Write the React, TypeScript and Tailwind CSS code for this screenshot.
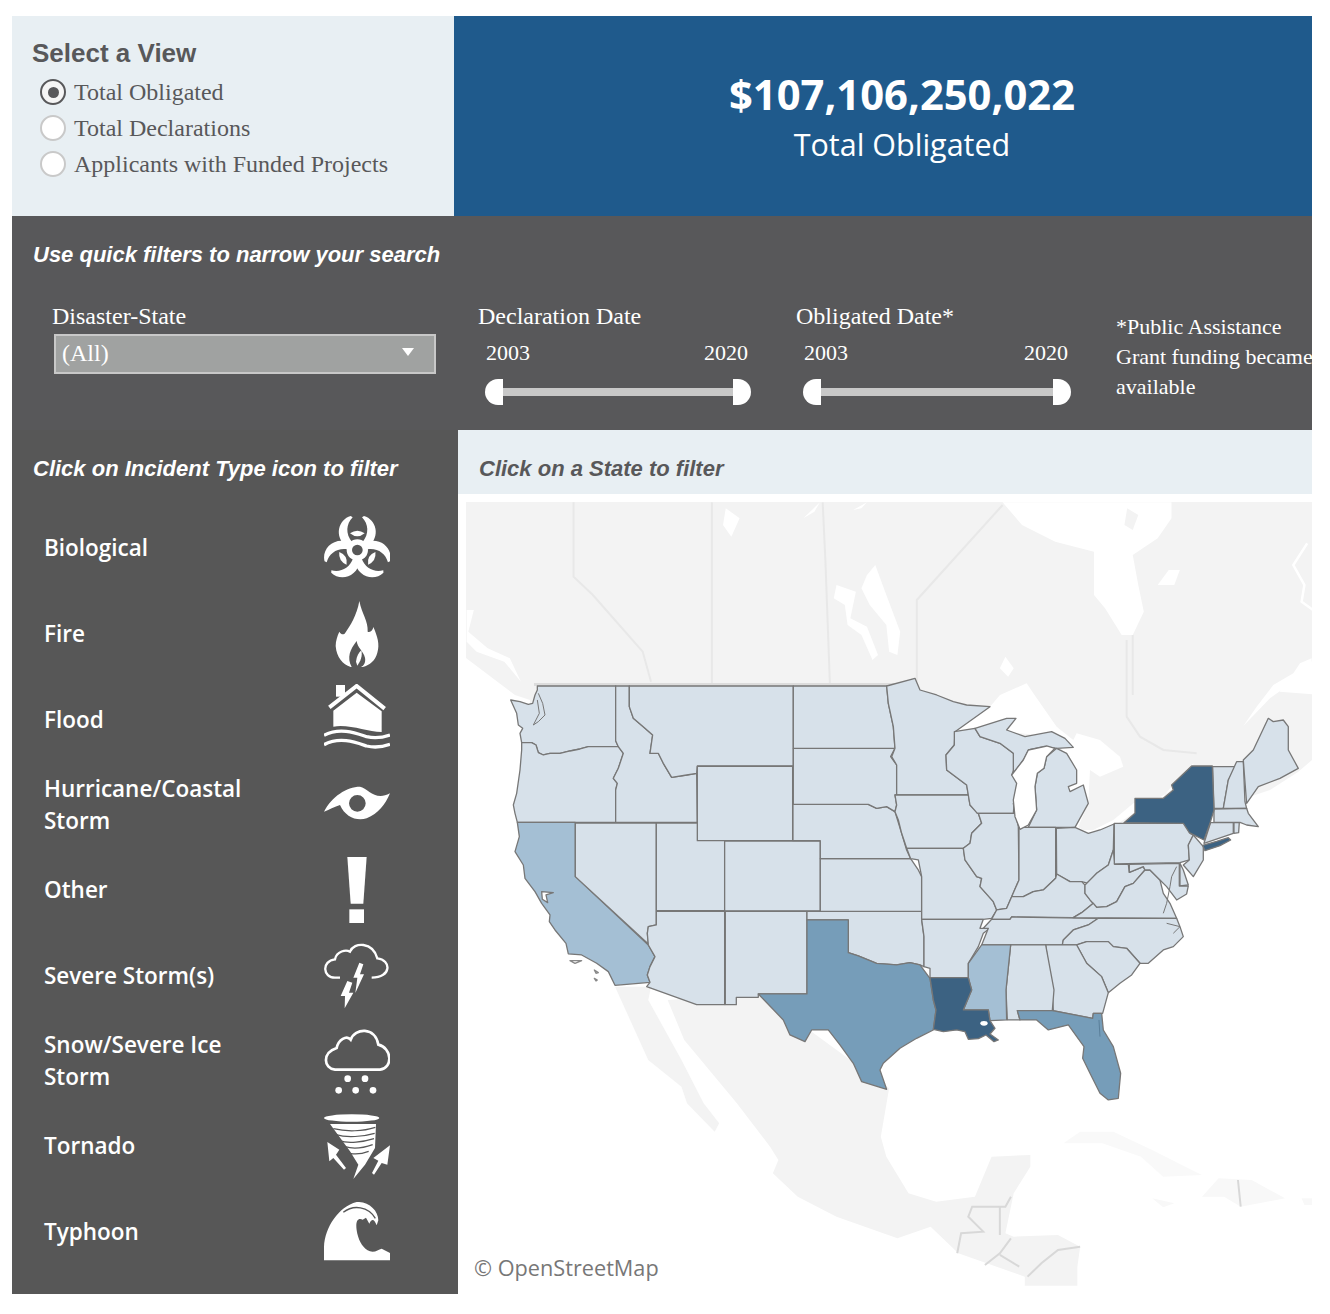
import React from "react";

const LIGHT = "#d7e1ea", MIDL = "#a4bfd4", MID = "#769db9", DARK = "#3c6282";
const vb = "non-scaling-stroke" as const;

const west: [string, string][] = [
  [LIGHT, "112,48 347,48 347,212 355,230 265,230 240,237 210,243 180,250 150,250 130,255 115,248 108,225 95,218 65,218 60,190 68,175 55,165 50,130 32,90 60,95 85,103 98,100 105,75 112,60"],
  [LIGHT, "65,218 95,218 108,225 115,248 130,255 150,250 180,250 210,243 240,237 265,230 355,230 370,250 355,295 340,325 352,340 347,360 347,457 52,457 45,430 40,405 50,370 60,300 65,240"],
  [MIDL, "52,457 226,457 226,620 445,825 465,860 450,890 442,915 450,937 345,946 325,905 290,880 245,855 205,852 198,820 165,780 148,755 150,735 125,700 105,665 75,625 70,585 45,545 58,500"],
  [LIGHT, "226,459 469,459 469,765 445,770 442,790 445,822 226,620"],
  [LIGHT, "347,48 388,48 388,110 400,145 435,175 458,195 450,250 475,250 490,280 515,322 560,315 590,310 592,457 347,457 347,360 352,340 340,325 355,295 370,250 355,230 347,212"],
  [LIGHT, "388,48 880,48 880,288 592,288 590,310 560,315 515,322 490,280 475,250 450,250 458,195 435,175 400,145 388,110"],
  [LIGHT, "592,289 878,289 878,512 592,512"],
  [LIGHT, "469,459 592,459 592,512 674,512 674,722 469,722"],
  [LIGHT, "674,513 961,513 961,723 674,723"],
  [LIGHT, "469,724 674,724 674,1004 590,1004 440,950 450,937 442,915 450,890 465,860 445,825 442,790 445,770 469,765"],
  [LIGHT, "676,724 921,724 921,972 775,972 775,982 709,982 709,1004 676,1004"],
  [LIGHT, "921,724 1265,724 1265,748 1272,800 1272,890 1260,885 1230,878 1190,885 1130,880 1075,858 1045,848 1045,750 921,750"],
  [MID, "921,750 1045,750 1045,848 1075,858 1130,880 1190,885 1230,878 1260,885 1290,925 1300,990 1308,1020 1300,1080 1250,1105 1200,1135 1150,1180 1140,1200 1160,1258 1085,1235 1060,1180 1020,1125 985,1080 935,1080 915,1115 870,1095 850,1050 775,972 921,972"],
  [LIGHT, "961,566 1232,566 1255,600 1265,620 1265,724 961,724"],
  [LIGHT, "879,403 1105,403 1130,415 1160,410 1185,425 1205,490 1220,540 1232,566 961,566 961,512 879,512"],
  [LIGHT, "880,235 1185,235 1172,260 1190,285 1190,375 1185,375 1190,405 1185,425 1160,410 1130,415 1105,403 880,403"],
  [LIGHT, "880,48 1160,48 1165,100 1180,170 1185,235 880,235"],
];

const east: [string, string][] = [
  [LIGHT, "-40,48 45,25 60,60 110,75 160,95 200,105 270,110 165,185 163,225 138,255 140,300 200,345 205,375 -10,375 -10,285 -25,260 -15,235 -20,170 -35,100"],
  [LIGHT, "-15,375 205,375 210,405 235,430 245,460 215,490 210,520 190,535 20,535 5,490 -5,450 -15,425 -10,405"],
  [LIGHT, "20,535 190,535 195,570 230,620 245,625 240,650 280,695 290,720 275,745 250,748 65,748 65,620 55,570 32,566"],
  [LIGHT, "65,748 250,748 240,775 270,775 250,790 235,830 205,880 205,923 90,923 90,895 72,890 72,800"],
  [LIGHT, "163,185 225,175 240,200 300,220 340,250 350,280 335,315 360,300 345,375 340,430 232,430 210,405 205,375 200,345 140,300 138,255 163,225"],
  [LIGHT, "232,430 345,430 340,400 355,470 357,630 335,680 320,715 290,720 280,695 240,650 245,625 230,620 195,570 190,535 210,520 215,490 245,460 235,430"],
  [LIGHT, "225,175 320,145 348,145 320,180 375,200 455,185 495,205 520,232 470,235 435,230 385,240 370,270 340,310 340,250 300,220 240,200"],
  [LIGHT, "470,235 500,250 530,300 530,340 505,350 510,365 550,345 565,400 525,472 385,472 410,420 405,350 412,310 432,295 440,260"],
  [LIGHT, "357,472 467,472 467,625 430,660 400,665 370,680 335,680 357,630"],
  [LIGHT, "469,475 525,472 565,490 600,480 642,462 640,540 625,585 590,610 565,640 545,635 510,635 470,612"],
  [LIGHT, "335,680 370,680 400,665 430,660 467,625 470,612 510,635 545,635 555,645 555,670 580,700 545,728 520,743 335,741 330,748 275,748 290,720 320,715"],
  [LIGHT, "275,748 330,748 335,741 595,745 565,765 520,780 490,810 487,825 245,825 265,775 250,775"],
  [LIGHT, "555,645 590,610 625,585 640,540 645,583 685,583 688,607 730,590 735,600 700,640 675,650 650,695 620,710 590,712 570,690 555,670"],
  [LIGHT, "520,743 545,728 580,700 590,712 620,710 650,695 675,650 700,640 735,600 750,600 780,630 790,670 810,700 830,745"],
  [LIGHT, "595,745 830,745 840,770 850,800 820,830 790,840 745,880 720,880 680,835 640,830 625,815 560,815 530,825 487,825 490,810 520,780 565,765"],
  [LIGHT, "530,825 560,815 625,815 640,830 680,835 720,880 695,915 660,940 625,968 605,920 560,880"],
  [LIGHT, "437,825 530,825 560,880 605,920 625,968 608,1030 580,1030 578,1045 460,1022 457,970"],
  [LIGHT, "332,825 437,825 462,960 457,1022 352,1022 360,1050 335,1050 322,1050 318,960"],
  [MIDL, "245,825 332,825 318,960 320,1050 270,1052 265,1020 190,1020 215,960 205,923 205,880"],
  [DARK, "90,923 205,923 215,960 190,1020 265,1020 270,1052 285,1075 270,1092 295,1110 282,1115 258,1095 235,1106 205,1108 195,1085 170,1080 130,1085 100,1078 108,1020 100,990"],
  [MID, "352,1022 457,1022 578,1045 580,1030 605,1030 610,1080 640,1130 662,1210 655,1285 625,1290 600,1270 570,1210 548,1165 552,1130 505,1065 445,1080 410,1050 360,1050"],
  [LIGHT, "643,460 855,460 870,490 880,495 865,525 868,570 840,578 643,582"],
  [LIGHT, "938,290 1010,290 985,330 970,415 942,415"],
  [LIGHT, "1010,275 1030,275 1035,395 1040,415 970,415 985,330"],
  [LIGHT, "1030,270 1060,240 1105,145 1120,155 1150,150 1165,170 1165,240 1195,295 1140,325 1075,350 1040,400 1033,310"],
  [LIGHT, "942,417 1040,415 1045,430 1075,470 1040,465 1020,457 942,457"],
  [LIGHT, "932,458 1000,458 1000,490 912,520"],
  [LIGHT, "1002,458 1018,458 1016,488 1002,490"],
  [LIGHT, "880,495 910,530 910,570 880,620 850,585 868,570 865,525"],
  [LIGHT, "840,580 850,600 865,645 840,648"],
  [LIGHT, "688,583 838,580 838,648 865,648 860,672 830,690 800,650 780,630 750,600 735,600 730,590 688,607"],
  [DARK, "672,458 705,430 705,385 790,385 820,360 815,345 875,288 937,288 942,420 930,460 912,510 868,488 850,460"],
  [DARK, "908,526 950,514 985,503 992,510 960,527 915,542"],
];

function USMap() {
  return (
    <svg viewBox="466 502 846 784" className="block w-full h-full">
      <polygon fill="#f3f3f3" points="466,502 1312,502 1312,760 1298,772 1270,790 1240,800 1200,800 1130,820 1100,830 530,830 530,700 515,695 466,658" />
      <g transform="translate(460,495) scale(0.5537,0.3333)">
        <polyline fill="none" stroke="#e8e8e8" strokeWidth="2" vectorEffect={vb} points="205,22 205,245 240,300 330,470 345,560" />
        <polyline fill="none" stroke="#e8e8e8" strokeWidth="2" vectorEffect={vb} points="455,22 455,565" />
        <polyline fill="none" stroke="#e8e8e8" strokeWidth="2" vectorEffect={vb} points="655,22 660,200 668,565" />
        <polyline fill="none" stroke="#e8e8e8" strokeWidth="2" vectorEffect={vb} points="980,30 825,315 825,560" />
        <polyline fill="none" stroke="#e8e8e8" strokeWidth="2" vectorEffect={vb} points="1215,420 1215,600" />
        <polygon fill="#fff" points="750,210 770,300 795,410 790,480 775,470 770,390 740,330 725,280 735,240" />
        <polygon fill="#fff" points="680,270 715,290 705,370 735,395 755,480 745,495 725,420 700,390 695,330 675,310" />
        <polygon fill="#fff" points="980,22 1285,22 1285,70 1260,130 1215,180 1225,270 1235,350 1215,420 1195,420 1165,340 1145,300 1145,170 1075,140 1015,90" />
        <polygon fill="#f3f3f3" points="1205,40 1225,60 1215,105 1200,90" />
        <polygon fill="#fff" points="985,485 1000,520 990,545 975,520" />
        <polygon fill="#fff" points="1280,225 1300,225 1290,270 1260,270" />
        <polyline fill="none" stroke="#fff" strokeWidth="2.5" vectorEffect={vb} points="1530,145 1505,210 1525,270 1520,320 1553,360" />
        <polygon fill="#fff" points="620,70 650,22 640,50" />
        <polygon fill="#fff" points="480,40 505,70 490,125 475,90" />
        <polygon fill="#fff" points="710,45 735,22 725,40" />
        <polygon fill="#fff" points="12,345 25,345 15,410 50,460 90,490 110,560 80,500 30,470 12,440" />
        <polygon fill="#fff" points="1553,490 1520,510 1480,590 1553,600" />
      </g>
      <g transform="translate(1100,640) scale(0.3333)">
        <polyline fill="none" stroke="#e8e8e8" strokeWidth="2" vectorEffect={vb} points="80,0 80,230 120,290 190,330 290,340" />
        <polygon fill="#fff" points="430,258 510,175 600,110 635,100 635,55 600,70 580,100 520,135 470,200" />
      </g>
      <g transform="translate(900,670) scale(0.3333)" fill="#fff">
        <polygon points="165,185 270,110 300,75 380,40 400,70 470,170 500,205 225,175" />
        <polygon points="470,170 520,210 530,190 600,210 660,260 670,290 600,320 570,300 565,400 535,470 560,490 640,450 700,400 790,380 830,330 880,280 880,310 800,370 700,430 640,470 525,490 500,300" />
      </g>
      <g transform="translate(460,980) scale(0.5537,0.3333)">
        <polygon fill="#f3f3f3" points="375,60 540,40 775,325 760,470 770,530 810,640 860,665 930,650 960,530 1030,525 1030,560 1000,640 985,760 1000,770 1080,765 1120,800 1115,860 1115,917 1020,917 1020,890 900,820 850,740 790,775 680,710 610,650 565,580 575,540 560,500 500,370 470,310 405,180" />
        <polygon fill="#f3f3f3" points="280,20 345,20 340,60 400,240 440,370 468,430 460,455 410,370 400,320 340,240" />
        <polygon fill="#f9f9f9" points="1090,490 1120,455 1180,455 1250,510 1310,560 1340,585 1270,590 1230,530 1160,490 1110,490" />
        <polygon fill="#f8f8f8" points="1340,650 1370,595 1430,600 1490,655 1410,680 1380,650" />
        <polygon fill="#f8f8f8" points="1250,655 1290,670 1270,682" />
        <polygon fill="#f8f8f8" points="1520,655 1553,655 1553,675 1525,675" />
        <polyline fill="none" stroke="#d8d8d8" strokeWidth="2" vectorEffect={vb} points="1405,600 1410,680" />
        <g fill="none" stroke="#d8d8d8" strokeWidth="2">
          <polyline vectorEffect={vb} points="995,650 985,680 925,680 918,710 945,755 905,760 898,820" />
          <polyline vectorEffect={vb} points="975,680 975,765" />
          <polyline vectorEffect={vb} points="995,775 975,820 948,855" />
          <polyline vectorEffect={vb} points="975,825 1010,860" />
          <polyline vectorEffect={vb} points="1120,800 1080,810 1050,850 1025,890" />
        </g>
      </g>
      <line x1="534" y1="684.5" x2="915" y2="684.5" stroke="#dcdcdc" strokeWidth="3" />
      <g transform="translate(500,670) scale(0.3333)" stroke="#777" strokeWidth="1.3" strokeLinejoin="round">
        {west.map(([f, p], i) => (
          <polygon key={i} fill={f} points={p} vectorEffect={vb} />
        ))}
        <polyline fill="none" stroke="#777" strokeWidth="1" points="115,70 128,100 135,135 115,155 100,165 118,130 112,90" vectorEffect={vb} />
        <polygon fill="#fff" points="125,665 160,668 138,675 143,698 127,688" vectorEffect={vb} />
        <polygon fill="#fff" stroke="#888" points="210,872 245,872 225,880" vectorEffect={vb} />
        <polygon fill="#fff" stroke="#888" points="283,900 295,908 288,910" vectorEffect={vb} />
        <polygon fill="#fff" stroke="#888" points="283,925 292,930 288,933" vectorEffect={vb} />
      </g>
      <g transform="translate(900,670) scale(0.3333)" stroke="#777" strokeWidth="1.3" strokeLinejoin="round">
        {east.map(([f, p], i) => (
          <polygon key={i} fill={f} points={p} vectorEffect={vb} />
        ))}
        <polygon fill="#fff" stroke="#777" points="335,315 370,270 385,240 440,228 465,235 440,260 432,295 412,310 405,350 410,420 385,465 360,478 345,440 340,390 350,340" vectorEffect={vb} />
        <polyline fill="none" stroke="#777" strokeWidth="1" points="830,590 815,620 810,650 800,700 790,730" vectorEffect={vb} />
        <polyline fill="none" stroke="#777" strokeWidth="1" points="800,760 840,770 820,790" vectorEffect={vb} />
        <polyline fill="none" stroke="#5a7f9a" strokeWidth="1" points="597,1050 600,1100" vectorEffect={vb} />
        <ellipse cx="252" cy="1060" rx="11" ry="7" fill="#fff" stroke="none" />
      </g>
    </svg>
  );
}

function Icon({ box, className, children }: { box: string; className?: string; children: React.ReactNode }) {
  return (
    <svg viewBox={box} className={"w-[66px] h-[66px] shrink-0 " + (className ?? "")}>
      {children}
    </svg>
  );
}

const W = "#ffffff", BG = "#575757";

function Bio() {
  const arm = (
    <g>
      <path fill={W} d="M152,48 C116,58 100,108 140,142 L156,126 C136,102 138,72 158,52 Z" />
      <path fill={W} d="M192,48 C228,58 244,108 204,142 L188,126 C208,102 206,72 186,52 Z" />
      <path fill={W} d="M150,100 Q172,84 194,100 Q172,118 150,100 Z" />
    </g>
  );
  return (
    <Icon box="72 42 198 198">
      {arm}
      <g transform="rotate(120 172 150)">{arm}</g>
      <g transform="rotate(240 172 150)">{arm}</g>
      <circle cx="172" cy="150" r="32" fill={W} />
      <circle cx="172" cy="150" r="16" fill={BG} />
    </Icon>
  );
}

function Fire() {
  return (
    <Icon box="72 300 198 198">
      <path fill={W} d="M178,300 C186,340 205,360 203,392 C212,395 218,388 220,378 C232,405 240,430 232,455 C226,478 210,492 188,498 L152,498 C128,490 110,470 107,435 C107,420 112,405 118,392 C124,402 132,402 136,395 C150,375 170,345 178,300 Z" />
      <path fill={BG} d="M155,498 C140,470 150,445 170,420 C172,440 190,450 195,470 C198,485 190,495 183,498 Z" />
      <path fill={W} d="M168,482 C170,465 176,455 184,448 C188,465 182,480 172,494 Z" />
    </Icon>
  );
}

function House() {
  return (
    <Icon box="72 552 198 198">
      <path fill={W} d="M108,555 H135 V590 H108 Z" />
      <path fill="none" stroke={W} strokeWidth="12" d="M88,622 L170,558 L254,626" />
      <path fill={W} d="M100,632 L170,578 L245,634 V696 C200,696 150,672 100,680 Z" />
      <path fill="none" stroke={W} strokeWidth="10" d="M72,706 C120,680 170,700 200,710 C225,716 250,712 270,705" />
      <path fill="none" stroke={W} strokeWidth="10" d="M72,734 C120,708 170,728 200,738 C225,744 250,740 270,733" />
    </Icon>
  );
}

function Eye() {
  return (
    <Icon box="72 30 198 198">
      <path fill={W} fillRule="evenodd" d="M72,155 C95,110 140,80 180,80 C205,85 225,125 270,100 C255,135 235,160 200,175 C170,185 135,170 120,135 C105,140 85,150 72,155 Z M172,105 A25,25 0 1 0 172.1,155 A25,25 0 1 0 172,105 Z" />
    </Icon>
  );
}

function Excl() {
  return (
    <Icon box="72 288 198 198">
      <path fill={W} d="M142,288 H200 L190,428 H152 Z" />
      <path fill={W} d="M148,445 H192 V486 H148 Z" />
    </Icon>
  );
}

function Storm() {
  return (
    <Icon box="72 546 198 198">
      <path fill="none" stroke={W} strokeWidth="7" d="M120,650 H105 C68,650 64,600 105,595 C110,570 138,565 150,572 C162,542 218,542 232,592 C274,596 276,650 215,650" />
      <path fill={W} d="M178,605 L160,650 L172,650 L166,696 L192,640 L180,640 L190,610 Z" />
      <path fill={W} d="M142,660 L122,705 L135,705 L134,742 L160,695 L147,695 L157,665 Z" />
    </Icon>
  );
}

function Snow() {
  return (
    <Icon box="72 25 198 198">
      <path fill="none" stroke={W} strokeWidth="8" d="M105,150 C70,145 66,100 110,85 C115,60 140,45 152,60 C165,25 225,20 235,75 C276,85 280,145 240,150 Z" />
      <g fill={W}>
        <circle cx="143" cy="177" r="10" />
        <circle cx="195" cy="177" r="10" />
        <circle cx="116" cy="212" r="10" />
        <circle cx="167" cy="212" r="10" />
        <circle cx="219" cy="212" r="10" />
      </g>
    </Icon>
  );
}

function Tornado() {
  return (
    <Icon box="72 275 198 198">
      <ellipse cx="155" cy="290" rx="83" ry="11" fill={W} />
      <path fill={W} d="M90,308 H228 L225,380 L195,430 L160,473 L175,430 L150,390 Z" />
      <g stroke={BG} strokeWidth="3.5" fill="none">
        <path d="M100,322 C140,332 190,330 226,318" />
        <path d="M108,340 C140,350 190,346 224,336" />
        <path d="M118,358 C145,368 190,362 222,352" />
        <path d="M135,376 C160,384 190,380 218,370" />
        <path d="M150,396 C170,400 190,396 206,390" />
      </g>
      <path fill={W} d="M82,362 L118,385 L108,400 L138,440 L132,445 L100,410 L88,420 Z" />
      <path fill={W} d="M270,372 L262,430 L245,425 L222,460 L216,455 L235,418 L220,410 Z" />
    </Icon>
  );
}

function Wave() {
  return (
    <Icon box="72 545 198 198">
      <path fill={W} d="M72,720 V680 C75,620 115,560 170,545 C205,543 235,570 235,600 L230,615 C222,595 215,595 208,610 L198,592 L188,598 C170,590 165,610 172,640 C178,665 190,685 210,693 C225,697 235,688 245,685 L270,698 V720 Z" />
      <path fill="none" stroke={BG} strokeWidth="4" d="M130,576 C160,552 205,558 226,594" />
    </Icon>
  );
}

const incidents: { label: React.ReactNode; icon: React.ReactNode; row: string; shift: string }[] = [
  { label: "Biological", icon: <Bio />, row: "h-[86px]", shift: "-mt-[2px]" },
  { label: "Fire", icon: <Fire />, row: "h-[86px]", shift: "-mt-[1px]" },
  { label: "Flood", icon: <House />, row: "h-[85px]", shift: "-mt-[5px]" },
  { label: <>Hurricane/Coastal<br />Storm</>, icon: <Eye />, row: "h-[85px]", shift: "-mt-[3px]" },
  { label: "Other", icon: <Excl />, row: "h-[86px]", shift: "-mt-[1px]" },
  { label: "Severe Storm(s)", icon: <Storm />, row: "h-[86px]", shift: "-mt-[1px]" },
  { label: <>Snow/Severe Ice<br />Storm</>, icon: <Snow />, row: "h-[84px]", shift: "-mt-[1px]" },
  { label: "Tornado", icon: <Tornado />, row: "h-[86px]", shift: "-mt-[1px]" },
  { label: "Typhoon", icon: <Wave />, row: "h-[86px]", shift: "mt-[6px]" },
];

function Thumb({ side }: { side: "l" | "r" }) {
  return (
    <div className={"w-[18px] h-[26px] bg-white shrink-0 " + (side === "l" ? "rounded-l-[13px]" : "rounded-r-[13px]")} />
  );
}

function Slider({ from, to, w }: { from: string; to: string; w: string }) {
  return (
    <div className={"mt-[8px] " + w}>
      <div className="flex justify-between pl-[8px] pr-[3px] text-[22px] leading-[26px] text-white">
        <span>{from}</span>
        <span>{to}</span>
      </div>
      <div className="flex items-center mt-[13px] pl-[7px]">
        <Thumb side="l" />
        <div className="flex-1 h-[8px] bg-[#c8c8c8]" />
        <Thumb side="r" />
      </div>
    </div>
  );
}

function Radio({ on, label }: { on?: boolean; label: string }) {
  return (
    <div className="flex items-center h-[36px]">
      <div className={"w-[26px] h-[26px] rounded-full flex items-center justify-center border-[2.5px] " + (on ? "border-[#58585a] bg-[#f5f5f5]" : "border-[#c9c9c9] bg-white")}>
        {on && <div className="w-[11px] h-[11px] rounded-full bg-[#58585a]" />}
      </div>
      <span className="ml-[8px] text-[24px] text-[#58585a]">{label}</span>
    </div>
  );
}

export default function App() {
  return (
    <div className="bg-white w-[1330px] h-[1314px] pt-[16px] pl-[12px] font-['Liberation_Serif',serif]">
      <div className="w-[1300px]">
        <div className="flex h-[200px]">
          <div className="w-[442px] bg-[#e8eff3] pl-[20px] pt-[20px]">
            <div className="font-['Liberation_Sans',sans-serif] font-bold text-[26px] leading-[34px] text-[#58585a]">Select a View</div>
            <div className="pl-[8px] mt-[4px]">
              <Radio on label="Total Obligated" />
              <Radio label="Total Declarations" />
              <Radio label="Applicants with Funded Projects" />
            </div>
          </div>
          <div className="flex-1 bg-[#1f5a8c] text-white flex flex-col items-center pl-[38px] pt-[52px] font-['Open_Sans',sans-serif]">
            <div className="font-bold text-[41.75px] leading-[52px]">$107,106,250,022</div>
            <div className="text-[30.5px] leading-[44px] mt-[2px]">Total Obligated</div>
          </div>
        </div>

        <div className="h-[214px] bg-[#58585a] text-white overflow-hidden pt-[24px]">
          <div className="pl-[21px] font-['Liberation_Sans',sans-serif] font-bold italic text-[22px] leading-[30px]">Use quick filters to narrow your search</div>
          <div className="flex mt-[30px]">
            <div className="w-[424px] pl-[40px] shrink-0">
              <div className="text-[24px] leading-[32px]">Disaster-State</div>
              <div className="ml-[2px] mt-[2px] w-[382px] h-[40px] bg-[#a0a2a1] border-2 border-[#c8c8c8] flex items-center justify-between pl-[6px] pr-[20px]">
                <span className="text-[24px] leading-[32px] -mt-[2px]">(All)</span>
                <span className="w-0 h-0 border-l-[6px] border-r-[6px] border-t-[8px] border-l-transparent border-r-transparent border-t-white -mt-[4px]" />
              </div>
            </div>
            <div className="w-[318px] pl-[42px] shrink-0">
              <div className="text-[24px] leading-[32px]">Declaration Date</div>
              <Slider from="2003" to="2020" w="w-[273px]" />
            </div>
            <div className="w-[320px] shrink-0 pl-[42px]">
              <div className="text-[24px] leading-[32px]">Obligated Date*</div>
              <Slider from="2003" to="2020" w="w-[275px]" />
            </div>
            <div className="flex-1 pt-[12px] pl-[42px] text-[22px] leading-[30px] whitespace-nowrap">
              <div>*Public Assistance</div>
              <div>Grant funding became</div>
              <div>available</div>
            </div>
          </div>
        </div>

        <div className="flex h-[864px]">
          <div className="w-[446px] bg-[#575757] text-white">
            <div className="pl-[21px] pt-[24px] h-[75px] font-['Liberation_Sans',sans-serif] font-bold italic text-[22px] leading-[30px]">Click on Incident Type icon to filter</div>
            <div className="font-['Open_Sans',sans-serif] font-semibold text-[22.5px] leading-[32px]">
              {incidents.map((r, i) => (
                <div key={i} className={"flex items-center justify-between pl-[32px] pr-[68px] " + r.row}>
                  <div>{r.label}</div>
                  <div className={r.shift}>{r.icon}</div>
                </div>
              ))}
            </div>
          </div>
          <div className="flex-1 flex flex-col">
            <div className="h-[64px] bg-[#e8eff3] pl-[21px] pt-[24px] font-['Liberation_Sans',sans-serif] font-bold italic text-[22px] leading-[30px] text-[#58585a]">Click on a State to filter</div>
            <div className="relative mt-[8px] ml-[8px] h-[784px]">
              <USMap />
              <div className="absolute left-[8px] bottom-[3px] font-['Open_Sans',sans-serif] text-[21.7px] leading-[30px] text-[#777777]">© OpenStreetMap</div>
            </div>
          </div>
        </div>
      </div>
    </div>
  );
}
